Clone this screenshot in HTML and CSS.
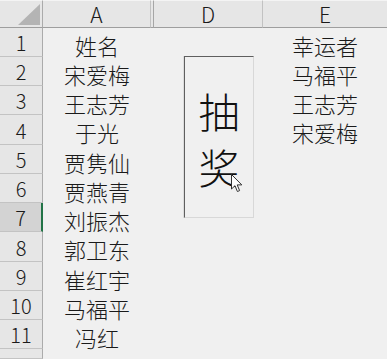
FILE: index.html
```html
<!DOCTYPE html>
<html lang="zh">
<head>
<meta charset="utf-8">
<link rel="stylesheet" href="styles.css">
</head>
<body>
<div class="sheet">
  <div class="corner"><span class="tri"></span></div>
  <div class="colh">A</div>
  <div class="colsep"></div>
  <div class="colh">D</div>
  <div class="colh last">E</div>

  <div class="rowh">1</div><div class="cell">姓名</div><div></div><div class="cell"></div><div class="cell">幸运者</div>
  <div class="rowh">2</div><div class="cell">宋爱梅</div><div></div><div class="cell"></div><div class="cell">马福平</div>
  <div class="rowh">3</div><div class="cell">王志芳</div><div></div><div class="cell"></div><div class="cell">王志芳</div>
  <div class="rowh">4</div><div class="cell">于光</div><div></div><div class="cell"></div><div class="cell">宋爱梅</div>
  <div class="rowh">5</div><div class="cell">贾隽仙</div><div></div><div class="cell"></div><div class="cell"></div>
  <div class="rowh">6</div><div class="cell">贾燕青</div><div></div><div class="cell"></div><div class="cell"></div>
  <div class="rowh active">7</div><div class="cell">刘振杰</div><div></div><div class="cell"></div><div class="cell"></div>
  <div class="rowh">8</div><div class="cell">郭卫东</div><div></div><div class="cell"></div><div class="cell"></div>
  <div class="rowh">9</div><div class="cell">崔红宇</div><div></div><div class="cell"></div><div class="cell"></div>
  <div class="rowh">10</div><div class="cell">马福平</div><div></div><div class="cell"></div><div class="cell"></div>
  <div class="rowh">11</div><div class="cell">冯红</div><div></div><div class="cell"></div><div class="cell"></div>
  <div class="rowh"></div><div class="cell"></div><div></div><div class="cell"></div><div class="cell"></div>

  <div class="button"><span>抽</span><span>奖</span></div>
  <svg class="cursor" width="12" height="19" viewBox="0 0 12 19">
    <path d="M0.5 0.5 L0.5 15 L4 11.7 L6.4 17.5 L8.6 16.6 L6.2 10.9 L10.8 10.9 Z" fill="#fff" stroke="#333" stroke-width="1" stroke-linejoin="miter"/>
  </svg>
</div>
</body>
</html>
```

FILE: styles.css
```css
html, body {
  margin: 0;
  padding: 0;
  background: #f0f0f0;
  overflow: hidden;
}

.sheet {
  position: relative;
  width: 387px;
  height: 359px;
  display: grid;
  grid-template-columns: 43px 108px 3px 109px 1fr;
  grid-template-rows: 28px 29px 29px 29px 30px 29px 29px 29px 30px 29px 29px 29px 1fr;
  font-family: "Noto Sans CJK SC", "Noto Sans", sans-serif;
  font-weight: 300;
  color: #1a1a1a;
}

.corner {
  position: relative;
  background: #e6e6e6;
  border-right: 1px solid #ababab;
  border-bottom: 1px solid #9e9e9e;
  border-top: 1px solid #f4f4f4;
  box-sizing: border-box;
}

.tri {
  position: absolute;
  right: 2px;
  bottom: 2px;
  width: 0;
  height: 0;
  border-left: 22px solid transparent;
  border-bottom: 21px solid #b4b4b4;
}

.colh {
  background: #e6e6e6;
  border-bottom: 1px solid #9e9e9e;
  border-right: 1px solid #c2c2c2;
  border-top: 1px solid #f4f4f4;
  box-sizing: border-box;
  display: flex;
  align-items: center;
  justify-content: center;
  font-size: 21px;
  line-height: 1;
  padding-top: 1px;
}

.colh.last {
  border-right: none;
}

.colsep {
  background: #e6e6e6;
  border-bottom: 1px solid #9e9e9e;
  border-right: 1px solid #a6a6a6;
  border-top: 1px solid #f4f4f4;
  box-sizing: border-box;
}

.rowh {
  background: #e6e6e6;
  border-right: 1px solid #ababab;
  border-bottom: 1px solid #c3c3c3;
  box-sizing: border-box;
  display: flex;
  align-items: center;
  justify-content: center;
  font-size: 20px;
  line-height: 1;
  padding-top: 2px;
}

.rowh.active {
  background: #d3d3d3;
  border-right: 2px solid #217346;
}

.cell {
  display: flex;
  align-items: center;
  justify-content: center;
  font-size: 22px;
  line-height: 1;
  padding-top: 4px;
  box-sizing: border-box;
}

.button {
  position: absolute;
  left: 184px;
  top: 56px;
  width: 70px;
  height: 162px;
  box-sizing: border-box;
  border-left: 1px solid #5f5f5f;
  border-top: 1px solid #5f5f5f;
  border-right: 1px solid #d8d8d8;
  border-bottom: 1px solid #d8d8d8;
  box-shadow: -1px 0 0 #dcdcdc;
  background: #f0f0f0;
  display: flex;
  flex-direction: column;
  align-items: center;
  justify-content: center;
  font-size: 41px;
  line-height: 56px;
  color: #111;
  padding-top: 2px;
}

.cursor {
  position: absolute;
  left: 231px;
  top: 174px;
}
```
